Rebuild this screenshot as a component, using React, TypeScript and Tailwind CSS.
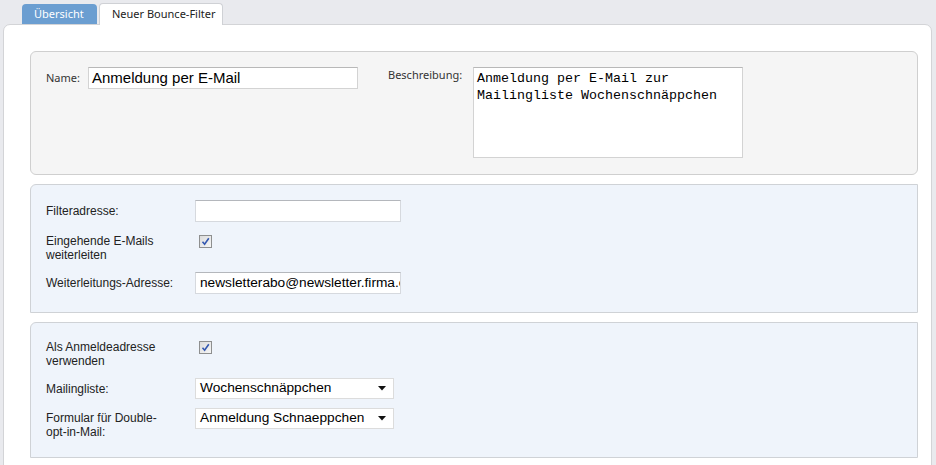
import React from "react";

const seg = { fontFamily: '"Noto Sans", "Open Sans", sans-serif' };
const ar = { fontFamily: '"Liberation Sans", Arial, sans-serif' };
const mono = { fontFamily: '"Liberation Mono", "Courier New", monospace' };

function Check() {
  return (
    <div className="w-[13px] h-[13px] border border-[#8e8f8f] bg-gradient-to-br from-[#dcdcdc] to-[#f6f6f6] flex items-center justify-center">
      <svg width="9" height="9" viewBox="0 0 9 9">
        <path d="M1.5 4.8 L3.6 7.2 L7.8 1.2" stroke="#3458b0" strokeWidth="1.6" fill="none" />
      </svg>
    </div>
  );
}

function Select({ value }: { value: string }) {
  return (
    <div
      className="w-[199px] h-[21px] bg-white border border-[#dcdcdc] flex items-center justify-between pl-[4px] pr-[7px] text-[13.7px] text-black"
      style={ar}
    >
      <span>{value}</span>
      <svg width="8" height="5" viewBox="0 0 8 5">
        <path d="M0 0 H8 L4 4.5 Z" fill="#111" />
      </svg>
    </div>
  );
}

function TextBox({ value, w }: { value?: string; w: number }) {
  return (
    <div
      className="h-[22px] bg-white border border-[#d6d9de] border-t-[#b4b7bc] flex items-center pl-[4px] overflow-hidden whitespace-nowrap text-[13.7px] text-black"
      style={{ ...ar, width: w }}
    >
      {value}
    </div>
  );
}

export default function App() {
  return (
    <div className="w-[936px] h-[465px] bg-[#e9eaee] overflow-hidden pl-[3px] pr-[4px]" style={seg}>
      <div className="flex items-end pl-[19px] pt-[3px] h-[24px] gap-[2px]">
        <div className="w-[75px] h-[20px] bg-[#6b9ed1] rounded-t-[4px] text-white text-[11px] flex items-center pl-[12px]">
          Übersicht
        </div>
        <div className="w-[124px] h-[22px] bg-white border border-b-0 border-[#cfd1d5] rounded-t-[4px] text-[#222] text-[11px] flex items-center pl-[12px] relative top-[1px]">
          Neuer Bounce-Filter
        </div>
      </div>
      <div className="bg-white border border-[#d3d4d7] rounded-t-[7px] h-[460px] pl-[26px] pr-[13px] pt-[26px] flex flex-col gap-[9px]">
        {/* Section 1 */}
        <div className="h-[124px] bg-[#f5f5f5] border border-[#cfcfcf] rounded-[6px] pt-[15px] pl-[15px] flex items-start">
          <div className="text-[11px] text-[#333] mt-[3px] w-[42px]">Name:</div>
          <div
            className="w-[270px] h-[22px] bg-white border border-[#d3d3d3] border-t-[#b8b8b8] flex items-center pl-[3px] text-[15px] text-black"
            style={ar}
          >
            Anmeldung per E-Mail
          </div>
          <div className="text-[11px] text-[#333] ml-[30px] mt-[0px] w-[85px]">Beschreibung:</div>
          <div
            className="w-[270px] h-[91px] bg-white border border-[#d3d3d3] border-t-[#b8b8b8] pl-[3px] pt-[2px] text-[13.33px] leading-[17px] text-black"
            style={mono}
          >
            Anmeldung per E-Mail zur
            <br />
            Mailingliste Wochenschnäppchen
          </div>
        </div>

        {/* Section 2 */}
        <div className="h-[129px] bg-[#eff4fb] border border-[#cfd2d6] rounded-tl-[6px] pt-[15px] pl-[15px] text-[12px] text-[#222]" style={ar}>
          <div className="flex items-center h-[22px]">
            <div className="w-[149px]">Filteradresse:</div>
            <TextBox w={206} />
          </div>
          <div className="flex items-start mt-[12px] h-[28px]">
            <div className="w-[149px] leading-[14px]">
              Eingehende E-Mails
              <br />
              weiterleiten
            </div>
            <div className="ml-[4px] mt-[1px]">
              <Check />
            </div>
          </div>
          <div className="flex items-center mt-[10px] h-[22px]">
            <div className="w-[149px]">Weiterleitungs-Adresse:</div>
            <TextBox w={206} value="newsletterabo@newsletter.firma.c" />
          </div>
        </div>

        {/* Section 3 */}
        <div className="h-[136px] bg-[#eff4fb] border border-[#cfd2d6] rounded-tl-[6px] pt-[17px] pl-[15px] text-[12px] text-[#222]" style={ar}>
          <div className="flex items-start h-[28px]">
            <div className="w-[149px] leading-[14px]">
              Als Anmeldeadresse
              <br />
              verwenden
            </div>
            <div className="ml-[4px] mt-[1px]">
              <Check />
            </div>
          </div>
          <div className="flex items-center mt-[10px] h-[21px]">
            <div className="w-[149px]">Mailingliste:</div>
            <Select value="Wochenschnäppchen" />
          </div>
          <div className="flex items-start mt-[9px]">
            <div className="w-[149px] leading-[14px] mt-[3px]">
              Formular für Double-
              <br />
              opt-in-Mail:
            </div>
            <Select value="Anmeldung Schnaeppchen" />
          </div>
        </div>
      </div>
    </div>
  );
}
